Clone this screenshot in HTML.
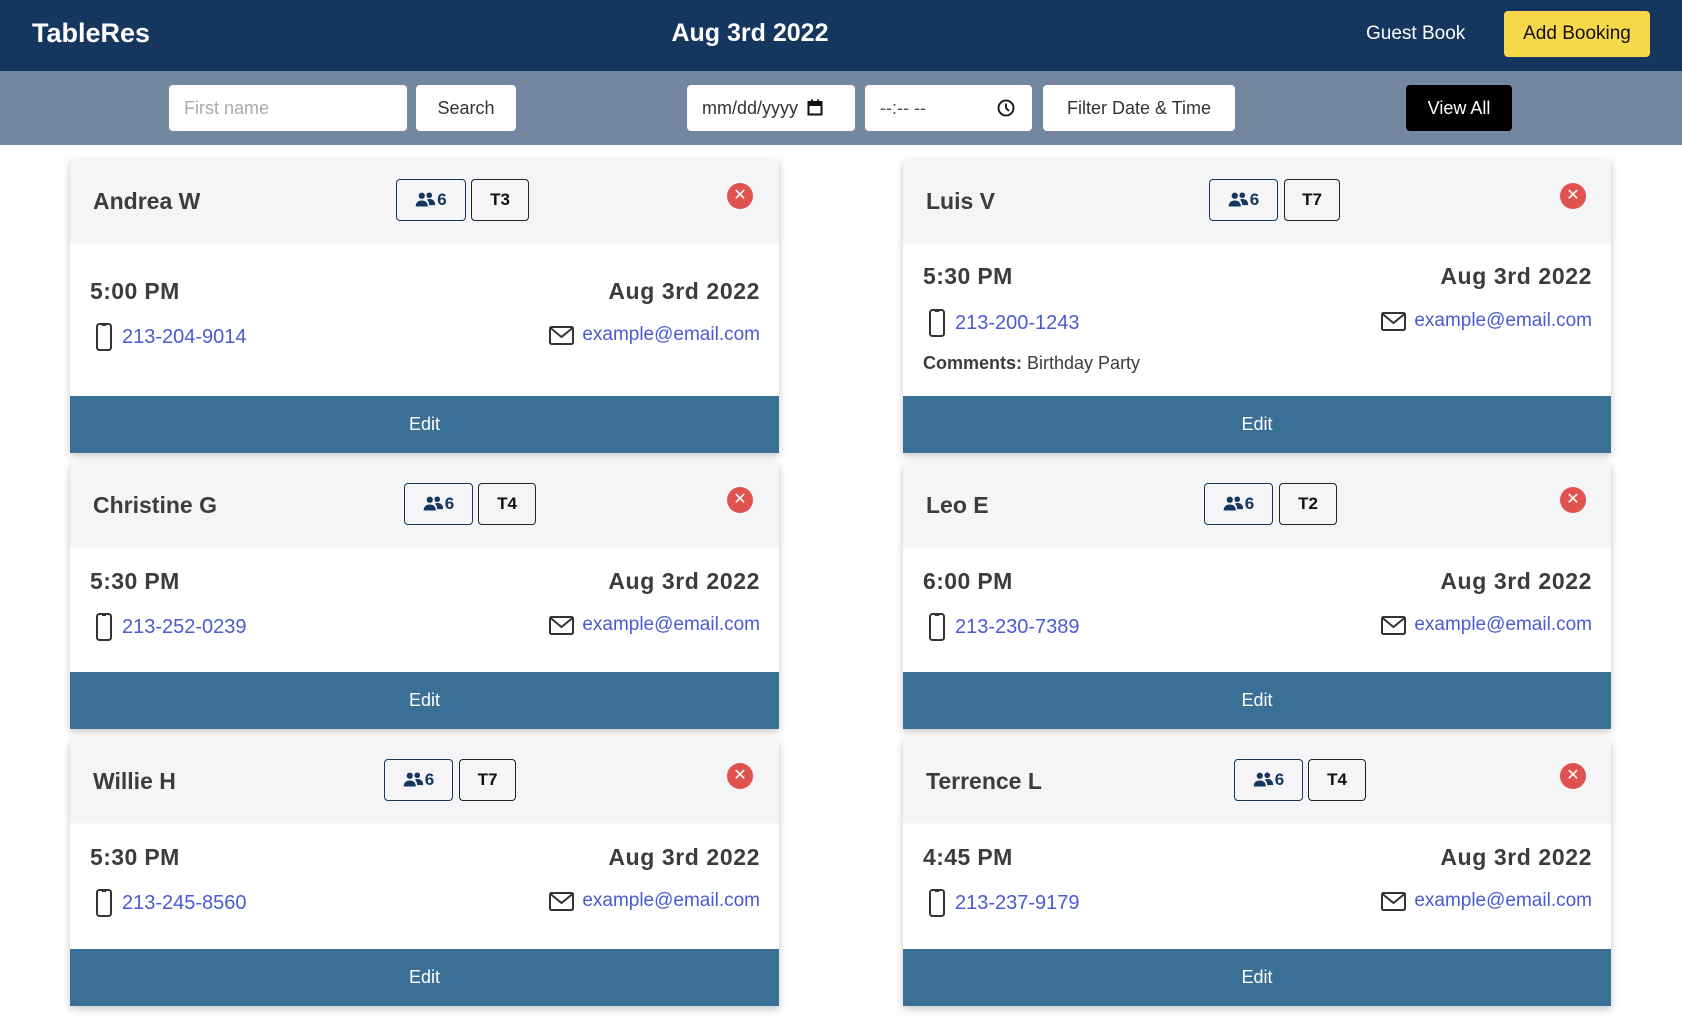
<!DOCTYPE html>
<html><head><meta charset="utf-8"><style>
*{box-sizing:border-box;margin:0;padding:0}
body{width:1682px;height:1024px;overflow:hidden;background:#fff;font-family:"Liberation Sans",Arial,sans-serif;position:relative;color:#3c3c3c}
.hdr{position:absolute;left:0;top:0;width:1682px;height:71px;background:#14365f}
.abs{position:absolute}
.bar{position:absolute;left:0;top:71px;width:1682px;height:74px;background:#7286a0}
.inp{position:absolute;top:85px;height:46px;background:#fff;border-radius:4px;font-size:18px;line-height:46px;color:#333}
.card{position:absolute;background:#fff;box-shadow:0 3px 8px rgba(0,0,0,.22)}
.ch{position:absolute;left:0;top:0;right:0;height:81px;background:#f5f5f7;box-shadow:0 2px 3px rgba(0,0,0,.05)}
.nm{position:absolute;left:23px;top:28px;font-size:23px;font-weight:bold;color:#3c3c3c;line-height:26px}
.bd{position:absolute;top:19px;height:42px;border-radius:4px;border:1.5px solid #222;font-size:17px;font-weight:bold;text-align:center;line-height:39px;color:#111}
.bd.p{border-color:#14365f;color:#14365f}
.bd svg{vertical-align:-2px;margin-right:1px}
.x{position:absolute;left:657px;top:23px;width:26px;height:26px;border-radius:50%;background:#e0524f;color:#fff;font-size:16px;line-height:26px;text-align:center}
.tm{position:absolute;left:20px;font-size:23px;font-weight:bold;line-height:26px;color:#3c3c3c;letter-spacing:.4px}
.dt{position:absolute;right:19px;font-size:23px;font-weight:bold;line-height:26px;color:#3c3c3c;letter-spacing:.6px}
.ph{position:absolute;left:26px;font-size:20px;line-height:24px;color:#4a5bd0}
.ph span,.em span{vertical-align:middle}
.em{position:absolute;right:19px;font-size:19px;line-height:24px;color:#4a5bd0}
.ed{position:absolute;left:0;right:0;bottom:0;height:57px;background:#3a7095;color:#fff;font-size:18px;text-align:center;line-height:57px}
.cm{position:absolute;left:20px;font-size:18px;color:#3c3c3c;line-height:22px}
</style></head><body>
<svg width="0" height="0" style="position:absolute"><defs><symbol id="ppl" viewBox="0 0 22 16"><circle cx="7" cy="4" r="3.3" fill="currentColor"/><circle cx="15" cy="3.5" r="3" fill="currentColor"/><path d="M0.5 15.5c0-4.5 2.8-6.5 6.5-6.5s6.5 2 6.5 6.5z" fill="currentColor"/><path d="M12.5 8.3c1-.6 1.8-.8 2.8-.8 3.3 0 6 1.8 6 6.5h-6.3c0-2.5-1-4.3-2.5-5.7z" fill="currentColor"/></symbol></defs></svg>
<div class="hdr"></div>
<div class="abs" style="left:32px;top:18px;font-size:27px;font-weight:bold;color:#fff">TableRes</div>
<div class="abs" style="left:600px;width:300px;text-align:center;top:19px;font-size:25px;font-weight:bold;color:#fff">Aug 3rd 2022</div>
<div class="abs" style="left:1366px;top:23px;font-size:19px;color:#fff">Guest Book</div>
<div class="abs" style="left:1504px;top:11px;width:146px;height:46px;background:#f6d84a;border-radius:4px;font-size:19px;line-height:46px;text-align:center;color:#111">Add Booking</div>
<div class="bar"></div>
<div class="inp" style="left:169px;width:238px;padding-left:15px;color:#aaa">First name</div>
<div class="inp" style="left:416px;width:100px;text-align:center">Search</div>
<div class="inp" style="left:687px;width:168px;padding-left:15px">mm/dd/yyyy <svg width="16" height="17" viewBox="0 0 16 17" style="vertical-align:-2px;margin-left:4px"><rect x="1.5" y="3" width="13" height="12.5" fill="none" stroke="#111" stroke-width="2"/><rect x="1.5" y="3" width="13" height="4" fill="#111"/><rect x="4" y="0.5" width="2" height="3" fill="#111"/><rect x="10" y="0.5" width="2" height="3" fill="#111"/></svg></div>
<div class="inp" style="left:865px;width:167px;padding-left:15px;color:#555">--:-- --<svg width="18" height="18" viewBox="0 0 18 18" style="position:absolute;left:132px;top:14px"><circle cx="9" cy="9" r="7.5" fill="none" stroke="#111" stroke-width="1.8"/><path d="M9 4.5V9l3 3" fill="none" stroke="#111" stroke-width="1.8"/></svg></div>
<div class="inp" style="left:1043px;width:192px;text-align:center">Filter Date &amp; Time</div>
<div class="inp" style="left:1406px;width:106px;background:#000;color:#fff;text-align:center">View All</div>

<div class="card" style="left:70px;top:160px;width:709px;height:293px">
<div class="ch"></div><div class="nm">Andrea W</div>
<div class="bd p" style="left:326px;width:70px"><svg width="21" height="15"><use href="#ppl"/></svg>6</div><div class="bd" style="left:401px;width:58px">T3</div>
<div class="x">✕</div>
<div class="tm" style="top:118px">5:00 PM</div><div class="dt" style="top:118px">Aug 3rd 2022</div>
<div class="ph" style="top:163px"><svg width="16" height="28" viewBox="0 0 16 28" style="vertical-align:middle;margin-right:10px"><rect x="1" y="1" width="14" height="26" rx="2.5" fill="none" stroke="#333" stroke-width="2"/><path d="M6 2h4" stroke="#333" stroke-width="2"/></svg><span>213-204-9014</span></div>
<div class="em" style="top:163px"><svg width="25" height="19" viewBox="0 0 25 19" style="vertical-align:middle;margin-right:8px"><rect x="1" y="1" width="23" height="17" rx="1.5" fill="none" stroke="#333" stroke-width="2"/><path d="M1.5 2l11 9 11-9" fill="none" stroke="#333" stroke-width="2"/></svg><span>example@email.com</span></div>
<div class="ed">Edit</div></div>

<div class="card" style="left:70px;top:464px;width:709px;height:265px">
<div class="ch"></div><div class="nm">Christine G</div>
<div class="bd p" style="left:334px;width:69px"><svg width="21" height="15"><use href="#ppl"/></svg>6</div><div class="bd" style="left:408px;width:58px">T4</div>
<div class="x">✕</div>
<div class="tm" style="top:104px">5:30 PM</div><div class="dt" style="top:104px">Aug 3rd 2022</div>
<div class="ph" style="top:149px"><svg width="16" height="28" viewBox="0 0 16 28" style="vertical-align:middle;margin-right:10px"><rect x="1" y="1" width="14" height="26" rx="2.5" fill="none" stroke="#333" stroke-width="2"/><path d="M6 2h4" stroke="#333" stroke-width="2"/></svg><span>213-252-0239</span></div>
<div class="em" style="top:149px"><svg width="25" height="19" viewBox="0 0 25 19" style="vertical-align:middle;margin-right:8px"><rect x="1" y="1" width="23" height="17" rx="1.5" fill="none" stroke="#333" stroke-width="2"/><path d="M1.5 2l11 9 11-9" fill="none" stroke="#333" stroke-width="2"/></svg><span>example@email.com</span></div>
<div class="ed">Edit</div></div>

<div class="card" style="left:70px;top:740px;width:709px;height:266px">
<div class="ch"></div><div class="nm">Willie H</div>
<div class="bd p" style="left:314px;width:69px"><svg width="21" height="15"><use href="#ppl"/></svg>6</div><div class="bd" style="left:389px;width:57px">T7</div>
<div class="x">✕</div>
<div class="tm" style="top:104px">5:30 PM</div><div class="dt" style="top:104px">Aug 3rd 2022</div>
<div class="ph" style="top:149px"><svg width="16" height="28" viewBox="0 0 16 28" style="vertical-align:middle;margin-right:10px"><rect x="1" y="1" width="14" height="26" rx="2.5" fill="none" stroke="#333" stroke-width="2"/><path d="M6 2h4" stroke="#333" stroke-width="2"/></svg><span>213-245-8560</span></div>
<div class="em" style="top:149px"><svg width="25" height="19" viewBox="0 0 25 19" style="vertical-align:middle;margin-right:8px"><rect x="1" y="1" width="23" height="17" rx="1.5" fill="none" stroke="#333" stroke-width="2"/><path d="M1.5 2l11 9 11-9" fill="none" stroke="#333" stroke-width="2"/></svg><span>example@email.com</span></div>
<div class="ed">Edit</div></div>

<div class="card" style="left:903px;top:160px;width:708px;height:293px">
<div class="ch"></div><div class="nm">Luis V</div>
<div class="bd p" style="left:306px;width:69px"><svg width="21" height="15"><use href="#ppl"/></svg>6</div><div class="bd" style="left:381px;width:56px">T7</div>
<div class="x">✕</div>
<div class="tm" style="top:103px">5:30 PM</div><div class="dt" style="top:103px">Aug 3rd 2022</div>
<div class="ph" style="top:149px"><svg width="16" height="28" viewBox="0 0 16 28" style="vertical-align:middle;margin-right:10px"><rect x="1" y="1" width="14" height="26" rx="2.5" fill="none" stroke="#333" stroke-width="2"/><path d="M6 2h4" stroke="#333" stroke-width="2"/></svg><span>213-200-1243</span></div>
<div class="em" style="top:149px"><svg width="25" height="19" viewBox="0 0 25 19" style="vertical-align:middle;margin-right:8px"><rect x="1" y="1" width="23" height="17" rx="1.5" fill="none" stroke="#333" stroke-width="2"/><path d="M1.5 2l11 9 11-9" fill="none" stroke="#333" stroke-width="2"/></svg><span>example@email.com</span></div>
<div class="cm" style="top:192px"><b>Comments:</b> Birthday Party</div>
<div class="ed">Edit</div></div>

<div class="card" style="left:903px;top:464px;width:708px;height:265px">
<div class="ch"></div><div class="nm">Leo E</div>
<div class="bd p" style="left:301px;width:69px"><svg width="21" height="15"><use href="#ppl"/></svg>6</div><div class="bd" style="left:376px;width:58px">T2</div>
<div class="x">✕</div>
<div class="tm" style="top:104px">6:00 PM</div><div class="dt" style="top:104px">Aug 3rd 2022</div>
<div class="ph" style="top:149px"><svg width="16" height="28" viewBox="0 0 16 28" style="vertical-align:middle;margin-right:10px"><rect x="1" y="1" width="14" height="26" rx="2.5" fill="none" stroke="#333" stroke-width="2"/><path d="M6 2h4" stroke="#333" stroke-width="2"/></svg><span>213-230-7389</span></div>
<div class="em" style="top:149px"><svg width="25" height="19" viewBox="0 0 25 19" style="vertical-align:middle;margin-right:8px"><rect x="1" y="1" width="23" height="17" rx="1.5" fill="none" stroke="#333" stroke-width="2"/><path d="M1.5 2l11 9 11-9" fill="none" stroke="#333" stroke-width="2"/></svg><span>example@email.com</span></div>
<div class="ed">Edit</div></div>

<div class="card" style="left:903px;top:740px;width:708px;height:266px">
<div class="ch"></div><div class="nm">Terrence L</div>
<div class="bd p" style="left:331px;width:69px"><svg width="21" height="15"><use href="#ppl"/></svg>6</div><div class="bd" style="left:405px;width:58px">T4</div>
<div class="x">✕</div>
<div class="tm" style="top:104px">4:45 PM</div><div class="dt" style="top:104px">Aug 3rd 2022</div>
<div class="ph" style="top:149px"><svg width="16" height="28" viewBox="0 0 16 28" style="vertical-align:middle;margin-right:10px"><rect x="1" y="1" width="14" height="26" rx="2.5" fill="none" stroke="#333" stroke-width="2"/><path d="M6 2h4" stroke="#333" stroke-width="2"/></svg><span>213-237-9179</span></div>
<div class="em" style="top:149px"><svg width="25" height="19" viewBox="0 0 25 19" style="vertical-align:middle;margin-right:8px"><rect x="1" y="1" width="23" height="17" rx="1.5" fill="none" stroke="#333" stroke-width="2"/><path d="M1.5 2l11 9 11-9" fill="none" stroke="#333" stroke-width="2"/></svg><span>example@email.com</span></div>
<div class="ed">Edit</div></div>
</body></html>
